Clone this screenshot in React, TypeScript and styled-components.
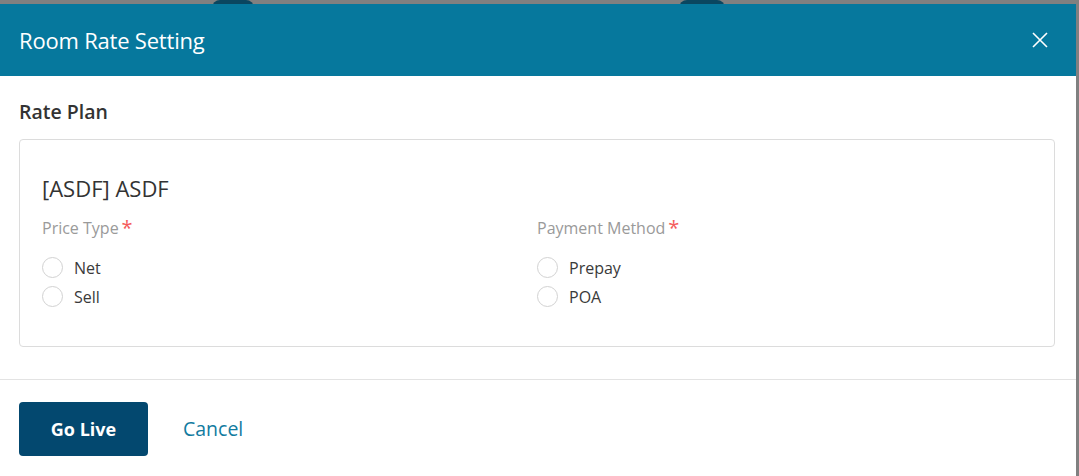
import React from 'react';
import styled, { createGlobalStyle } from 'styled-components';

const GlobalStyle = createGlobalStyle`
  html, body {
    margin: 0;
    padding: 0;
    background: #808080;
    font-family: "Open Sans", "Liberation Sans", sans-serif;
    overflow: hidden;
  }
  * {
    box-sizing: border-box;
  }
`;

interface Option {
  label: string;
}

interface FieldGroup {
  title: string;
  options: Option[];
}

const groups: FieldGroup[] = [
  { title: 'Price Type', options: [{ label: 'Net' }, { label: 'Sell' }] },
  { title: 'Payment Method', options: [{ label: 'Prepay' }, { label: 'POA' }] },
];

const App: React.FC = () => {
  return (
    <>
      <GlobalStyle />
      <Backdrop>
        <PeekShape $left={212} $width={42} />
        <PeekShape $left={679} $width={46} />
        <Modal>
          <Header>
            <Title>Room Rate Setting</Title>
            <CloseButton aria-label="Close">
              <svg width="16" height="16" viewBox="0 0 16 16">
                <path d="M1 1 L15 15 M15 1 L1 15" stroke="#fff" strokeWidth="1.6" fill="none" />
              </svg>
            </CloseButton>
          </Header>
          <Body>
            <SectionTitle>Rate Plan</SectionTitle>
            <Card>
              <PlanName>[ASDF] ASDF</PlanName>
              <Columns>
                {groups.map((g) => (
                  <Field key={g.title}>
                    <FieldLabel>
                      {g.title}
                      <Required>*</Required>
                    </FieldLabel>
                    <RadioList>
                      {g.options.map((o) => (
                        <RadioRow key={o.label}>
                          <RadioCircle />
                          <RadioText>{o.label}</RadioText>
                        </RadioRow>
                      ))}
                    </RadioList>
                  </Field>
                ))}
              </Columns>
            </Card>
          </Body>
          <Footer>
            <PrimaryButton>Go Live</PrimaryButton>
            <LinkButton>Cancel</LinkButton>
          </Footer>
        </Modal>
      </Backdrop>
    </>
  );
};

export default App;

// Styled components
const Backdrop = styled.div`
  position: relative;
  width: 1079px;
  height: 476px;
  padding-top: 4px;
  background: #808080;
`;

const PeekShape = styled.div<{ $left: number; $width: number }>`
  position: absolute;
  top: 0;
  left: ${(p) => p.$left}px;
  width: ${(p) => p.$width}px;
  height: 8px;
  border-radius: 10px 10px 0 0;
  background: #0a4660;
`;

const Modal = styled.div`
  position: relative;
  width: 1076px;
  height: 472px;
  background: #fff;
  display: flex;
  flex-direction: column;
`;

const Header = styled.div`
  height: 72px;
  background: #06789d;
  display: flex;
  align-items: center;
  justify-content: space-between;
  padding: 0 28px 0 19px;
`;

const Title = styled.h1`
  margin: 0;
  font-size: 22px;
  font-weight: 400;
  color: #fff;
  letter-spacing: -0.2px;
`;

const CloseButton = styled.button`
  background: none;
  border: none;
  padding: 0;
  width: 16px;
  height: 16px;
  display: flex;
  cursor: pointer;
`;

const Body = styled.div`
  padding: 24px 21px 32px 19px;
  border-bottom: 1px solid #e3e3e3;
`;

const SectionTitle = styled.h2`
  margin: 0 0 15px;
  font-size: 19.5px;
  line-height: 24px;
  font-weight: 600;
  color: #333;
`;

const Card = styled.div`
  height: 208px;
  border: 1px solid #dcdcdc;
  border-radius: 4px;
  padding: 34px 22px 0;
`;

const PlanName = styled.div`
  font-size: 22px;
  line-height: 28px;
  color: #333;
  margin-bottom: 15px;
`;

const Columns = styled.div`
  display: grid;
  grid-template-columns: 495px 1fr;
`;

const Field = styled.div`
  display: flex;
  flex-direction: column;
`;

const FieldLabel = styled.div`
  font-size: 16px;
  line-height: 22px;
  color: #9a9a9a;
  margin-bottom: 14px;
`;

const Required = styled.span`
  color: #f45b5b;
  font-size: 20px;
  line-height: 0;
  margin-left: 3px;
  position: relative;
  top: 1px;
`;

const RadioList = styled.div`
  display: flex;
  flex-direction: column;
`;

const RadioRow = styled.label`
  display: flex;
  align-items: center;
  height: 29px;
  cursor: pointer;
`;

const RadioCircle = styled.span`
  width: 21px;
  height: 21px;
  border: 1px solid #d2d2d2;
  border-radius: 50%;
  background: #fff;
  margin-right: 11px;
`;

const RadioText = styled.span`
  font-size: 16px;
  color: #3a3a3a;
`;

const Footer = styled.div`
  display: flex;
  align-items: center;
  padding: 22px 19px 0;
  gap: 35px;
`;

const PrimaryButton = styled.button`
  width: 129px;
  height: 54px;
  border: none;
  border-radius: 4px;
  background: #03486f;
  color: #fff;
  font-family: "Open Sans", "Liberation Sans", sans-serif;
  font-size: 18px;
  font-weight: 700;
  padding-bottom: 2px;
  cursor: pointer;
`;

const LinkButton = styled.button`
  background: none;
  border: none;
  padding: 0 0 2px;
  color: #127b9f;
  font-family: "Open Sans", "Liberation Sans", sans-serif;
  font-size: 19.5px;
  font-weight: 500;
  cursor: pointer;
`;
